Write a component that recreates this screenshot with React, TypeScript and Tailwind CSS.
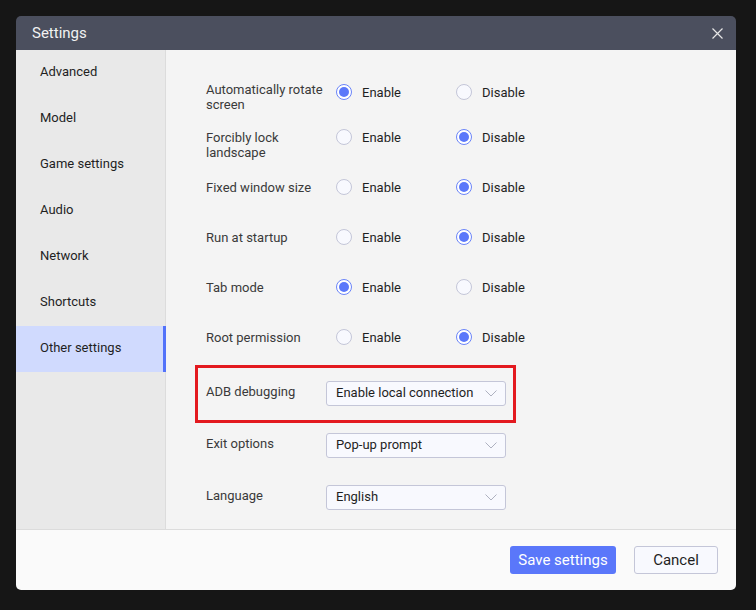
import { useState } from "react";

const navItems = [
  "Advanced",
  "Model",
  "Game settings",
  "Audio",
  "Network",
  "Shortcuts",
  "Other settings",
];

type RadioRow = {
  label: string;
  enabled: boolean;
  h: string;
  labelCls: string;
};

const radioRows: RadioRow[] = [
  { label: "Automatically rotate screen", enabled: true, h: "h-[45px]", labelCls: "-mt-[2px]" },
  { label: "Forcibly lock landscape", enabled: false, h: "h-[50px]", labelCls: "mt-px" },
  { label: "Fixed window size", enabled: false, h: "h-[50px]", labelCls: "mt-px" },
  { label: "Run at startup", enabled: false, h: "h-[50px]", labelCls: "mt-px" },
  { label: "Tab mode", enabled: true, h: "h-[50px]", labelCls: "mt-px" },
  { label: "Root permission", enabled: false, h: "h-[36px]", labelCls: "mt-px" },
];

function Radio({ checked, text }: { checked: boolean; text: string }) {
  return (
    <div className="w-[120px] h-4 flex items-center gap-[10px]">
      {checked ? (
        <span className="w-4 h-4 rounded-full border border-[#6a84f9] bg-white flex items-center justify-center">
          <span className="w-[10px] h-[10px] rounded-full bg-[#5b78fa]" />
        </span>
      ) : (
        <span className="w-4 h-4 rounded-full border border-[#c4c6d8] bg-[#f8f9fe]" />
      )}
      <span className="text-[13px] leading-[15px] text-[#1f1f1f]">{text}</span>
    </div>
  );
}

function Select({ value }: { value: string }) {
  return (
    <div className="w-[180px] h-[25px] rounded-[3px] border border-[#c4c6d8] bg-[#f8f9fe] flex items-center justify-between pl-[9px] pr-[8px]">
      <span className="text-[13px] text-[#1f1f1f] -mt-px">{value}</span>
      <svg width="12" height="7" viewBox="0 0 12 7" fill="none">
        <path d="M0.5 0.5L6 6L11.5 0.5" stroke="#aeb1c0" strokeWidth="1" />
      </svg>
    </div>
  );
}

export default function App() {
  const [active, setActive] = useState("Other settings");

  return (
    <div
      className="w-[756px] h-[610px] bg-[#161616] p-4"
      style={{ fontFamily: "Roboto, 'Liberation Sans', sans-serif" }}
    >
      <div className="w-[720px] h-[574px] rounded-[5px] overflow-hidden flex flex-col">
        <div className="h-[34px] bg-[#4b4f5e] flex items-center justify-between pl-4 pr-[13px]">
          <span className="text-[15px] text-[#f2f2f2]">Settings</span>
          <svg width="11" height="11" viewBox="0 0 11 11" fill="none">
            <path d="M0.5 0.5L10.5 10.5M10.5 0.5L0.5 10.5" stroke="#e6e6e6" strokeWidth="1.2" />
          </svg>
        </div>

        <div className="flex h-[479px]">
          <div className="w-[150px] bg-[#e9e9e9] border-r border-[#dcdcdc]">
            {navItems.map((item) => (
              <div
                key={item}
                onClick={() => setActive(item)}
                className={
                  item === active
                    ? "h-[46px] pl-6 pb-[2px] flex items-center text-[13px] text-[#1f1f1f] bg-[#d0dafe] border-r-[3px] border-[#5272fa] -mr-px"
                    : "h-[46px] pl-6 pb-[2px] flex items-center text-[13px] text-[#1f1f1f]"
                }
              >
                {item}
              </div>
            ))}
          </div>

          <div className="flex-1 bg-[#f4f4f4] pl-10 pt-[34px]">
            {radioRows.map((row) => (
              <div key={row.label} className={`flex items-start ${row.h}`}>
                <div className={`w-[130px] pr-3 text-[13px] leading-[15px] text-[#3a3a3a] ${row.labelCls}`}>
                  {row.label}
                </div>
                <Radio checked={row.enabled} text="Enable" />
                <Radio checked={!row.enabled} text="Disable" />
              </div>
            ))}

            <div className="w-[321px] -ml-[11px] border-[3px] border-[#e3191f] pl-2 pt-[13px] pb-[14px] flex items-center">
              <div className="w-[120px] text-[13px] text-[#3a3a3a] -mt-[3px]">ADB debugging</div>
              <Select value="Enable local connection" />
            </div>

            <div className="mt-[10px] flex items-center">
              <div className="w-[120px] text-[13px] text-[#3a3a3a] -mt-[3px]">Exit options</div>
              <Select value="Pop-up prompt" />
            </div>

            <div className="mt-[27px] flex items-center">
              <div className="w-[120px] text-[13px] text-[#3a3a3a] -mt-[3px]">Language</div>
              <Select value="English" />
            </div>
          </div>
        </div>

        <div className="h-[61px] border-t border-[#dcdcdc] bg-[#fafafa] flex items-center justify-end gap-[18px] pr-[18px]">
          <button className="w-[106px] h-[28px] rounded-[3px] bg-[#5a77fa] text-[15px] text-white">
            Save settings
          </button>
          <button className="w-[84px] h-[28px] rounded-[3px] border border-[#c4c6d8] bg-[#f8f9fe] text-[15px] text-[#1f1f1f]">
            Cancel
          </button>
        </div>
      </div>
    </div>
  );
}
